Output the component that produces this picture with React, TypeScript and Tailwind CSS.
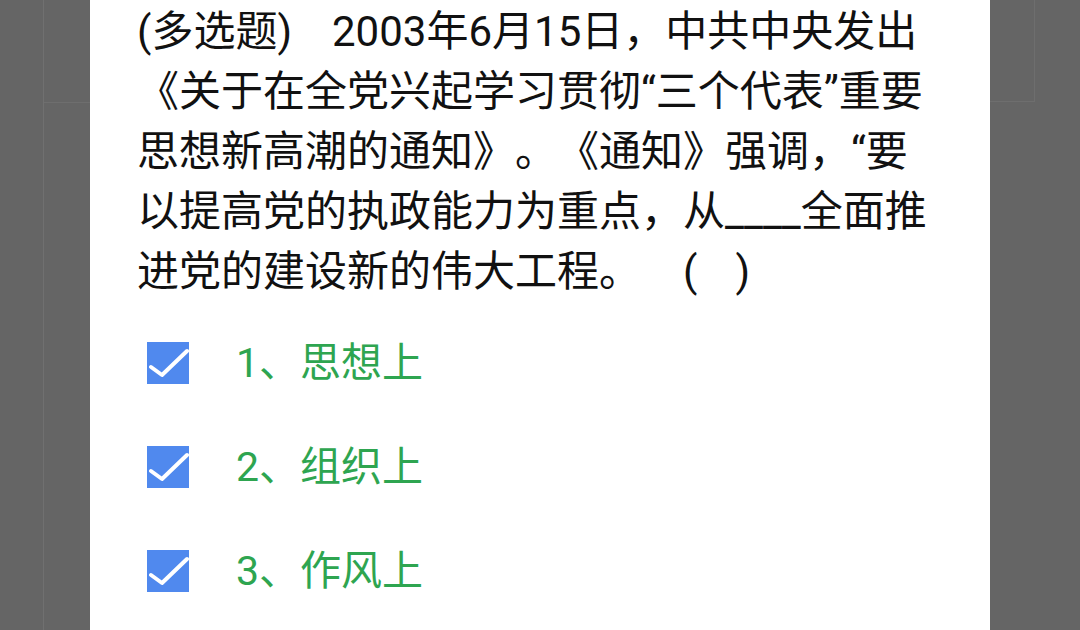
import React from 'react';

const questionLines = [
    '《关于在全党兴起学习贯彻“三个代表”重要',
    '思想新高潮的通知》。《通知》强调，“要',
    '以提高党的执政能力为重点，从____全面推',
    '进党的建设新的伟大工程。',
];

const options = ['1、思想上', '2、组织上', '3、作风上'];

function CheckBox() {
    return (
        <div className="w-[42px] h-[42px] bg-[#5089ee] flex items-center justify-center">
            <svg width="42" height="42" viewBox="0 0 42 42">
                <polyline
                    points="4,25 15,33 40,9"
                    fill="none"
                    stroke="white"
                    strokeWidth="4"
                    strokeLinecap="round"
                    strokeLinejoin="round"
                />
            </svg>
        </div>
    );
}

function SideLeft() {
    return (
        <div className="w-[90px] h-full flex bg-[#656565]">
            <div className="w-[44px] h-full border-r border-[#707070]" />
            <div className="flex-1 h-[103px] border-b border-[#6e6e6e]" />
        </div>
    );
}

function SideRight() {
    return (
        <div className="w-[90px] h-full flex bg-[#656565]">
            <div className="w-[45px] h-[102px] border-b border-r border-[#6e6e6e]" />
            <div className="flex-1 h-full" />
        </div>
    );
}

export default function App() {
    return (
        <div
            className="w-[1080px] h-[630px] overflow-hidden flex bg-[#656565] [text-spacing-trim:space-all]"
            style={{ fontFamily: 'Roboto, "Noto Sans CJK SC", sans-serif' }}
        >
            <SideLeft />
            <div className="w-[900px] h-full bg-white pl-[47px] pt-[2px]">
                <div className="text-[42px] leading-[60px] text-[#111] whitespace-nowrap">
                    <div>
                        (多选题)<span className="ml-[40px]">2003年6月15日，中共中央发出</span>
                    </div>
                    {questionLines.map((line, i) => (
                        <div key={i}>
                            {line}
                            {i === 3 && <span className="ml-[42px]">(<span className="ml-[38px]">)</span></span>}
                        </div>
                    ))}
                </div>

                <div className="mt-[40px] flex flex-col gap-[62px]">
                    {options.map((opt) => (
                        <div key={opt} className="flex items-center h-[42px]">
                            <div className="ml-[10px]">
                                <CheckBox />
                            </div>
                            <span className="ml-[47px] text-[41px] leading-[42px] text-[#2ea550]">{opt}</span>
                        </div>
                    ))}
                </div>
            </div>
            <SideRight />
        </div>
    );
}
